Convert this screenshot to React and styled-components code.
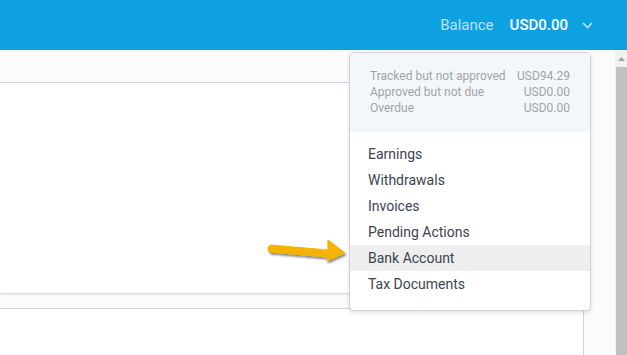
import React from "react";
import styled, { createGlobalStyle } from "styled-components";

const GlobalStyle = createGlobalStyle`
  html, body {
    margin: 0;
    padding: 0;
    overflow: hidden;
    background: #f9fbfd;
    font-family: Roboto, "Liberation Sans", Arial, sans-serif;
  }
`;

const Page = styled.div`
  position: relative;
  width: 627px;
  height: 355px;
  overflow: hidden;
  display: flex;
  flex-direction: column;
`;

const TopBar = styled.header`
  height: 50px;
  background: #0ea1e1;
  display: flex;
  align-items: center;
  justify-content: flex-end;
  padding-right: 34px;
  flex-shrink: 0;
`;

const BalanceLabel = styled.span`
  color: #b8e3f7;
  font-size: 15px;
  margin-right: 16px;
`;

const BalanceValue = styled.span`
  color: #ffffff;
  font-size: 15px;
  font-weight: 500;
  margin-right: 14px;
`;

const Body = styled.div`
  flex: 1;
  display: flex;
`;

const Content = styled.main`
  flex: 1;
  padding: 32px 31px 0 0;
  display: flex;
  flex-direction: column;
  gap: 15px;
`;

const Card = styled.section`
  background: #fff;
  border-top: 1px solid #d2d4d7;
  border-right: 1px solid #d2d4d7;
  height: ${(p) => p.$height}px;
  box-shadow: ${(p) => (p.$shadow ? "0 1px 2px rgba(0,0,0,0.18)" : "none")};
  flex-shrink: 0;
`;

const Scrollbar = styled.div`
  width: 12px;
  background: #f1f1f1;
  display: flex;
  flex-direction: column;
  align-items: center;
`;

const ScrollArrow = styled.div`
  height: 17px;
  display: flex;
  align-items: center;
  justify-content: center;
`;

const ScrollThumb = styled.div`
  flex: 1;
  width: 11px;
  background: #c1c1c1;
`;

const Dropdown = styled.div`
  position: absolute;
  left: 349px;
  top: 52px;
  width: 240px;
  background: #fff;
  border: 1px solid #cfd3d8;
  border-radius: 5px;
  box-shadow: 0 2px 4px rgba(0, 0, 0, 0.12);
  overflow: hidden;
`;

const Summary = styled.div`
  background: #f4f7fa;
  padding: 15px 20px 16px 20px;
  display: grid;
  grid-template-columns: 1fr auto;
  font-size: 12px;
  line-height: 16px;
  color: #a0a4a8;
`;

const Amount = styled.span`
  text-align: right;
`;

const Menu = styled.ul`
  list-style: none;
  margin: 0;
  padding: 9px 0 13px 0;
`;

const MenuItem = styled.li`
  height: 26px;
  line-height: 26px;
  padding-left: 18px;
  font-size: 14px;
  color: #3d4451;
  background: ${(p) => (p.$active ? "#eeeeee" : "transparent")};
`;

const Pointer = styled.svg`
  position: absolute;
  left: 264px;
  top: 236px;
`;

const summary = [
  ["Tracked but not approved", "USD94.29"],
  ["Approved but not due", "USD0.00"],
  ["Overdue", "USD0.00"],
];

const items = [
  "Earnings",
  "Withdrawals",
  "Invoices",
  "Pending Actions",
  "Bank Account",
  "Tax Documents",
];

export default function App() {
  return (
    <Page>
      <GlobalStyle />
      <TopBar>
        <BalanceLabel>Balance</BalanceLabel>
        <BalanceValue>USD0.00</BalanceValue>
        <svg width="11" height="7" viewBox="0 0 11 7">
          <path
            d="M1 1l4.5 4.5L10 1"
            fill="none"
            stroke="#b8e3f7"
            strokeWidth="1.6"
          />
        </svg>
      </TopBar>
      <Body>
        <Content>
          <Card $height={210} $shadow />
          <Card $height={60} />
        </Content>
        <Scrollbar>
          <ScrollArrow>
            <svg width="7" height="4" viewBox="0 0 7 4">
              <path d="M0 4L3.5 0L7 4z" fill="#a3a3a3" />
            </svg>
          </ScrollArrow>
          <ScrollThumb />
        </Scrollbar>
      </Body>
      <Dropdown>
        <Summary>
          {summary.map(([label, value]) => (
            <React.Fragment key={label}>
              <span>{label}</span>
              <Amount>{value}</Amount>
            </React.Fragment>
          ))}
        </Summary>
        <Menu>
          {items.map((item) => (
            <MenuItem key={item} $active={item === "Bank Account"}>
              {item}
            </MenuItem>
          ))}
        </Menu>
      </Dropdown>
      <Pointer width="90" height="34" viewBox="0 0 90 34">
        <defs>
          <filter id="sh" x="-20%" y="-40%" width="140%" height="180%">
            <feDropShadow
              dx="1"
              dy="2"
              stdDeviation="1.2"
              floodColor="#000"
              floodOpacity="0.5"
            />
          </filter>
        </defs>
        <path
          d="M6 9 Q2 12.5 6 16 L64 21 L63 25 L81 17 L64 4 L64 14 Z"
          fill="#f5b300"
          stroke="#f5b300"
          strokeWidth="1"
          strokeLinejoin="round"
          filter="url(#sh)"
        />
      </Pointer>
    </Page>
  );
}
